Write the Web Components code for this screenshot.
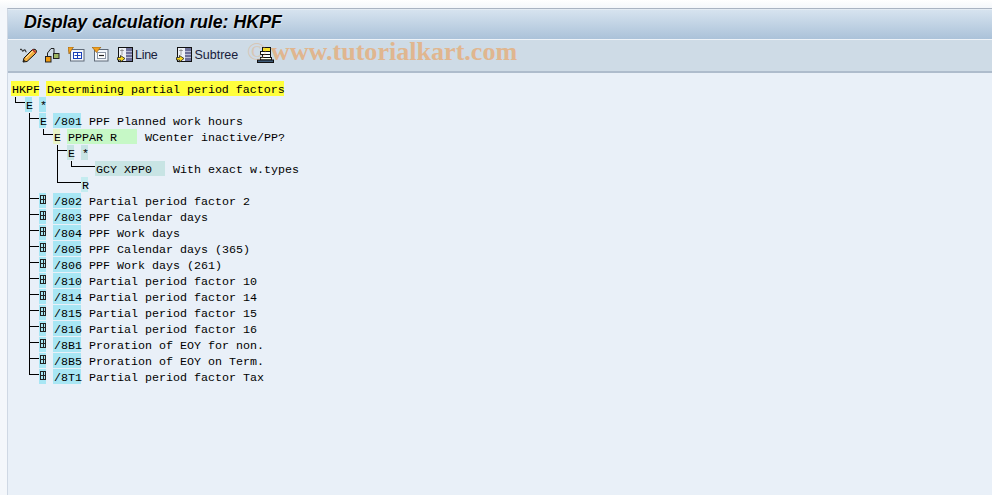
<!DOCTYPE html>
<html><head><meta charset="utf-8">
<style>
html,body{margin:0;padding:0;background:#fff}
body{width:992px;height:495px;overflow:hidden}
</style></head><body>
<sap-screen>
  <sap-title slot="title">Display calculation rule: HKPF</sap-title>
  <sap-toolbar slot="toolbar"></sap-toolbar>
  <rule-tree slot="content"></rule-tree>
</sap-screen>
<script>
function def(name, html, init){
  customElements.define(name, class extends HTMLElement{
    constructor(){super();this.attachShadow({mode:'open'}).innerHTML=html;}
    connectedCallback(){ if(init) init.call(this,this.shadowRoot); }
  });
}
def('sap-screen',`<style>
:host{display:flex;flex-direction:column;width:992px;height:495px;box-sizing:border-box;padding:8px 0 0 7px;background:linear-gradient(#fff,#f4f7fb 8px)}
.f{flex:1;min-height:0;display:flex;flex-direction:column;border-top:1px solid #aab4c2;border-left:1px solid #cfd8e4;position:relative}
::slotted(rule-tree){flex:1;min-height:0}
</style><div class="f"><slot name="title"></slot><slot name="toolbar"></slot><slot name="content"></slot></div>`);
def('sap-title',`<style>
:host{display:flex;align-items:center;height:30px;box-sizing:border-box;padding:0 0 5px 16px;background:linear-gradient(#d6e3ef,#abc2d9);border-top:1px solid #e4ecf4;
font:italic bold 17.8px "Liberation Sans",sans-serif;color:#000;text-shadow:0 0 2px #fff8,1px 1px 1px #fff6}
</style><slot></slot>`);
const ICONS={
 pencil:`<svg width="17" height="16" viewBox="0 0 17 16"><path d="M0 3c1-2 2 0 2.500 1S4 2 5 3s.5 2 1.500 2" fill="none" stroke="#333" stroke-width="1.100"/><path d="M3 15 4 11 12 3c1-1 3-1 4 0s0 3-1 4L7 14.500z" fill="#f4b040" stroke="#111"/><path d="M6 11 13 4" stroke="#fbe0a0"/><path d="M12.500 2.500 16 6" stroke="#b33" stroke-width="1.500"/><path d="M3 15l1.500-2 1 1z" fill="#111"/></svg>`,
 nodes:`<svg width="16" height="16" viewBox="0 0 16 16"><path d="M3.500 9V6L7 1.500h3V7" fill="none" stroke="#222"/><rect x="1.500" y="9.500" width="5.500" height="5.500" fill="#f09a10" stroke="#222"/><rect x="9.500" y="6.500" width="5.500" height="5" fill="#9db562" stroke="#222"/></svg>`,
 expand:`<svg width="17" height="15" viewBox="0 0 17 15"><rect x="2.500" y="2.500" width="13.500" height="11.500" fill="#f2f6fb" stroke="#5f6a78"/><rect x="5.500" y="5.500" width="8" height="6" fill="#fff" stroke="#1a3fb8"/><path d="M6.500 8.500h6M9.500 6v5" stroke="#1a3fb8"/><path d="M0 0h5.500L1 7z" fill="#f0a020" stroke="#8a5208" stroke-width=".6"/></svg>`,
 collapse:`<svg width="17" height="15" viewBox="0 0 17 15"><rect x="2.500" y="2.500" width="13.500" height="11.500" fill="#f2f6fb" stroke="#5f6a78"/><rect x="5.500" y="5.500" width="8" height="6" fill="#fff" stroke="#8a94a4"/><path d="M7 8.500h5" stroke="#222" stroke-width="1.200"/><path d="M0 0h9L4.500 5.500z" fill="#f0a020" stroke="#8a5208" stroke-width=".6"/></svg>`,
 line:`<svg width="16" height="16" viewBox="0 0 16 16"><rect x="1.500" y=".5" width="14" height="14" fill="#edf1f7" stroke="#111"/><rect x="9" y="1" width="6" height="13" fill="#6d7099"/><path d="M9 4.500h6M9 7.500h6M9 10.500h6" stroke="#b8bcd6"/><path d="M5 2.500v6M3.500 3.500h3" stroke="#555" stroke-dasharray="1 1"/><path d="M.5 10.500h3V8.500l4.500 3-4.500 3.500V13h-3z" fill="#f8d820" stroke="#222" stroke-width=".8"/></svg>`,
 stack:`<svg width="17" height="16" viewBox="0 0 17 16"><rect x="5.500" y=".5" width="8" height="4" fill="#f8e22c" stroke="#111"/><rect x="3.500" y="4.500" width="10" height="3" fill="#fff" stroke="#111"/><rect x="5.500" y="7.500" width="8" height="3" fill="#fff" stroke="#111"/><rect x="3.500" y="10.500" width="11" height="2.500" fill="#ffe" stroke="#111"/><rect x=".5" y="13" width="16" height="2.500" fill="#3d5a78" stroke="#111"/></svg>`
};
def('sap-icon',`<style>:host{display:inline-flex;align-items:center}svg{display:block}span{display:block}</style><span></span>`,function(r){r.querySelector('span').innerHTML=ICONS[this.getAttribute('name')];});
def('sap-toolbar',`<style>
:host{display:flex;align-items:center;height:34px;box-sizing:border-box;padding:0 0 2px 12px;background:#cedbe6;border-top:1px solid #eef3f8;border-bottom:2px solid #aebccc;position:relative;
font:12.5px "Liberation Sans",sans-serif;color:#18203a}
.g{display:flex;align-items:center}
.t{margin-left:2px;padding-top:1px}
.wm{position:absolute;left:239px;top:-3px;font:bold 26.100px "Liberation Serif",serif;color:#e9a566;opacity:.68;white-space:nowrap}
.wm i{font-style:normal;font-weight:400;opacity:.55;margin-right:4px}
</style>
<sap-icon name="pencil"></sap-icon>
<sap-icon name="nodes" style="margin-left:7px"></sap-icon>
<sap-icon name="expand" style="margin-left:8px"></sap-icon>
<sap-icon name="collapse" style="margin-left:7px"></sap-icon>
<span class="g" style="margin-left:8px"><sap-icon name="line"></sap-icon><span class="t" style="letter-spacing:-.3px">Line</span></span>
<span class="g" style="margin-left:19px"><sap-icon name="line"></sap-icon><span class="t">Subtree</span></span>
<sap-icon name="stack" style="margin-left:19px"></sap-icon>
<span class="wm"><i>©</i>www.tutorialkart.com</span>`);
const Y='#ffff3c',C='#a8e6f4',G='#c6f8c6',T='#c8e4e4',L='#c4ecf0';
const ROWS=[
 [[0,4,'HKPF',Y],[5,34,'Determining partial period factors',Y]],
 [[2,1,'E',C],[4,1,'*',C]],
 [[4,1,'E',C],[6,4,'/801',C],[11,0,'PPF Planned work hours']],
 [[6,1,'E','#e8f4c8'],[8,10,'PPPAR R',G],[19,0,'WCenter inactive/PP?']],
 [[8,1,'E',T],[10,1,'*',T]],
 [[12,10,'GCY XPP0',T],[23,0,'With exact w.types']],
 [[10,1,'R',L]],
];
[['/802','Partial period factor 2'],['/803','PPF Calendar days'],['/804','PPF Work days'],['/805','PPF Calendar days (365)'],['/806','PPF Work days (261)'],['/810','Partial period factor 10'],['/814','Partial period factor 14'],['/815','Partial period factor 15'],['/816','Partial period factor 16'],['/8B1','Proration of EOY for non.'],['/8B5','Proration of EOY on Term.'],['/8T1','Partial period factor Tax']]
.forEach(([a,b])=>ROWS.push([[4,1,'+',C],[6,4,a,C],[11,0,b]]));
def('rule-tree',`<style>
:host{display:block;background:#e9f0f8;position:relative;overflow:hidden;padding:8px 0 0 3px;box-sizing:border-box;font:11.67px "Liberation Mono",monospace;color:#000}
.r{display:grid;grid-template-columns:repeat(130,7px);height:16px}
.c{white-space:pre;height:15px;line-height:18px;padding-left:1px}
svg.l{position:absolute;left:0;top:0;pointer-events:none}
svg.p{display:block;margin:2px 0 0 0}
</style><div id="w"></div>`,function(r){
 const w=r.getElementById('w');
 ROWS.forEach(row=>{
  const d=document.createElement('div');d.className='r';
  row.forEach(([col,len,txt,bg])=>{
   const c=document.createElement('div');c.className='c';
   c.style.gridColumn=(col+1)+' / span '+(len||Math.max(txt.length,1));
   if(bg)c.style.background=bg;
   if(txt==='+'){c.innerHTML='<svg class="p" width="6" height="9" viewBox="0 0 6 9"><path d="M.5 .5H5.500V8.500H.5ZM.5 4.500H5.500M3 .5V8.500" stroke="#222" fill="none" stroke-width="1" shape-rendering="crispEdges"/></svg>';}
   else c.textContent=txt;
   d.appendChild(c);
  });
  w.appendChild(d);
 });
 const ox=8,oy=73;
 const seg=[
  [15,97,15,102],[15,102,25,102],
  [29,113,29,374],[29,118,39,118],
  [43,129,43,134],[43,134,53,134],
  [57,145,57,182],[57,150,67,150],[57,182,81,182],
  [71,161,71,166],[71,166,95,166],
 ];
 for(let i=0;i<12;i++){const y=198+16*i;seg.push([29,y,39,y]);}
 const s=seg.map(([a,b,c,e])=>a===c?`M${a-ox+.5} ${b-oy}V${e-oy+1}`:`M${a-ox} ${b-oy+.5}H${c-ox}`).join('');
 const wrap=document.createElementNS('http://www.w3.org/2000/svg','svg');
 wrap.setAttribute('class','l');wrap.setAttribute('width','990');wrap.setAttribute('height','430');
 wrap.innerHTML=`<path d="${s}" stroke="#000" fill="none" shape-rendering="crispEdges"/>`;
 r.appendChild(wrap);
});
</script>
</body></html>
